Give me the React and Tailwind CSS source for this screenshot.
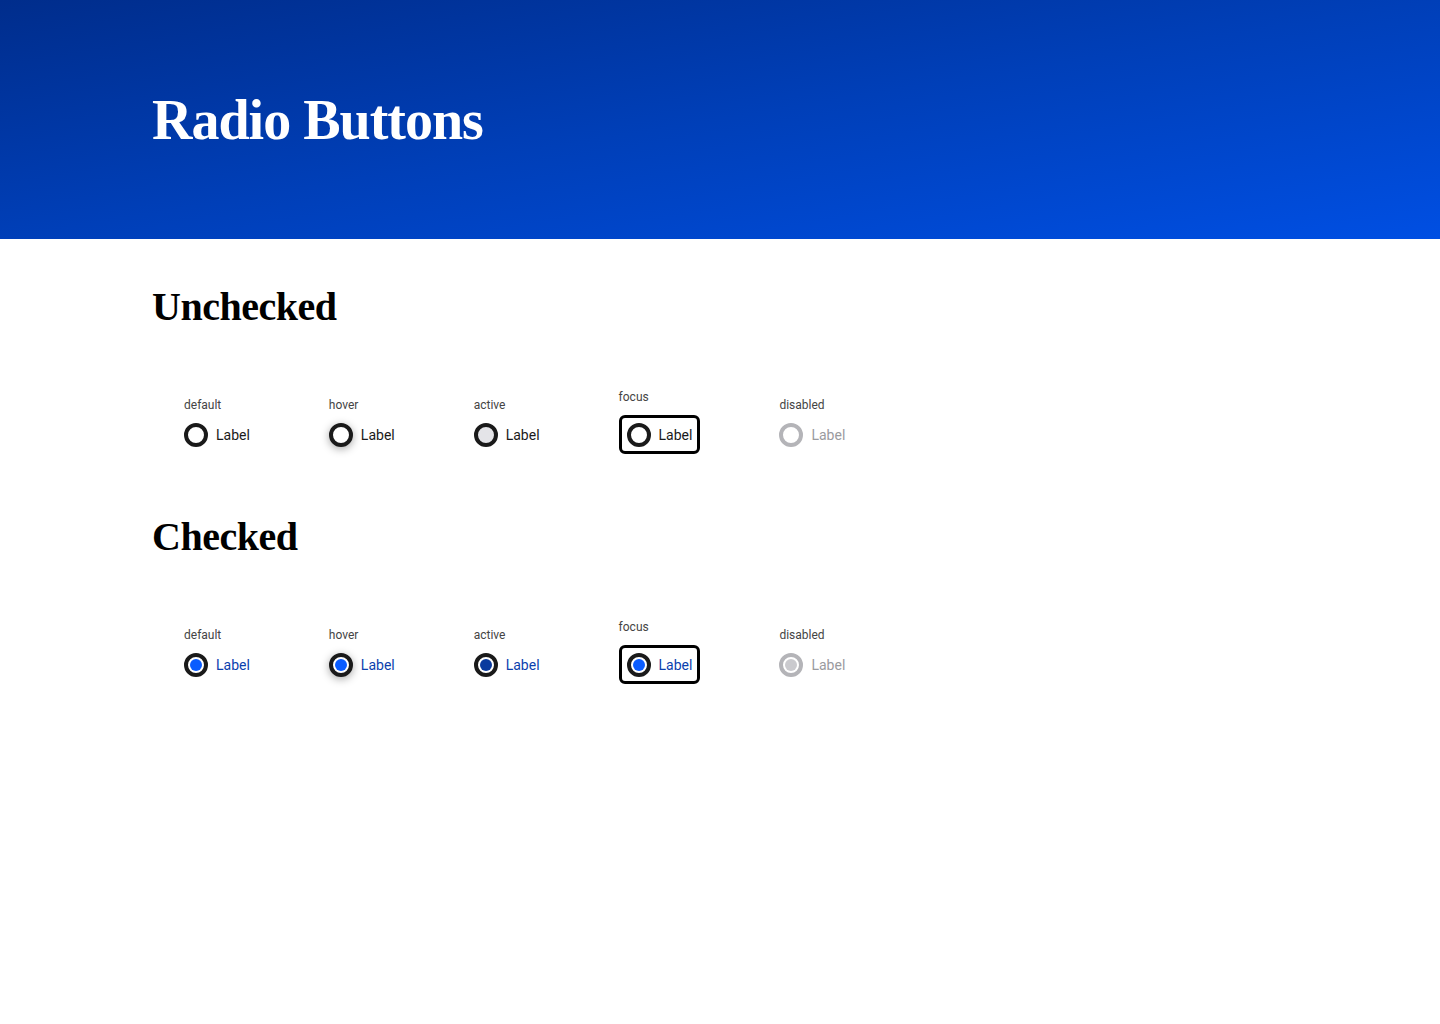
import React from 'react';

const states = ['default', 'hover', 'active', 'focus', 'disabled'];

const Radio = ({ state, checked }) => {
  const disabled = state === 'disabled';

  let ring = 'border-[#1a1a1a] bg-white';
  if (state === 'active' && !checked) ring = 'border-[#1a1a1a] bg-[#e4e4e8]';
  if (disabled) ring = 'border-[#b4b4b8] bg-white';

  let dot = 'bg-[#0a5cff]';
  if (state === 'active') dot = 'bg-[#0a3a9e]';
  if (disabled) dot = 'bg-[#cacace]';

  const shadow = state === 'hover' ? 'shadow-[0_2px_8px_rgba(0,0,0,0.35)]' : '';

  let labelColor = checked ? 'text-[#0b3fae]' : 'text-[#1a1a1a]';
  if (disabled) labelColor = 'text-[#9a9a9e]';

  const inner = (
    <div className="flex items-center gap-2">
      <span
        className={`flex h-6 w-6 items-center justify-center rounded-full border-4 ${ring} ${shadow}`}
      >
        {checked && <span className={`h-3 w-3 rounded-full ${dot}`} />}
      </span>
      <span className={`text-sm leading-5 ${labelColor}`}>Label</span>
    </div>
  );

  if (state === 'focus') {
    return (
      <div className="rounded-md border-[3px] border-black pl-[5px] pr-[5px] pt-[5px] pb-1">
        {inner}
      </div>
    );
  }
  return inner;
};

const Section = ({ title, checked }) => (
  <section className={checked ? 'mt-[63px]' : 'mt-[48px]'}>
    <h2 className="font-['Liberation_Serif',serif] text-[40px] font-bold leading-none tracking-[-0.5px] text-black">
      {title}
    </h2>
    <div className="mt-[62px] flex items-center gap-[79px] pl-8">
      {states.map(state => (
        <div key={state} className="flex flex-col items-start">
          <span className="mb-[10px] text-xs leading-4 text-[#444]">{state}</span>
          <Radio state={state} checked={checked} />
        </div>
      ))}
    </div>
  </section>
);

const App = () => {
  return (
    <div className="min-h-[1024px] bg-white font-['Roboto','Liberation_Sans',sans-serif]">
      {/* Header */}
      <header className="flex h-[239px] items-center bg-gradient-to-br from-[#002d8c] via-[#003fb8] to-[#004fe3] px-[152px]">
        <h1 className="font-['Liberation_Serif',serif] text-[56px] font-bold leading-none tracking-[-1px] text-white">
          Radio Buttons
        </h1>
      </header>

      {/* Main Content */}
      <main className="px-[152px]">
        <Section title="Unchecked" checked={false} />
        <Section title="Checked" checked />
      </main>
    </div>
  );
};

export default App;
